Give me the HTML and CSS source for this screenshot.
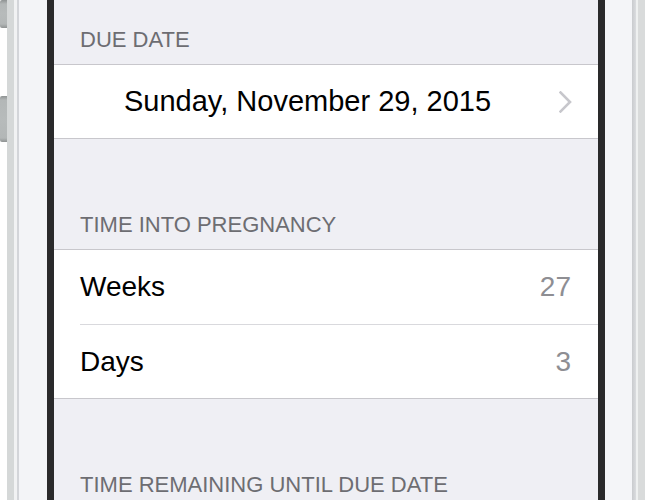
FILE: index.html
```html
<!DOCTYPE html>
<html lang="en">
<head>
<meta charset="utf-8">
<title>Due Date</title>
<link rel="stylesheet" href="styles.css">
</head>
<body>
<div class="device">
  <div class="side-buttons">
    <div class="hw-button hw-button-top"></div>
    <div class="hw-button hw-button-volume"></div>
  </div>
  <div class="frame frame-left"></div>
  <div class="bezel"></div>
  <main class="screen">
    <div class="section-header section-header-first">DUE DATE</div>
    <div class="group">
      <div class="cell cell-date">
        <span class="date-text">Sunday, November 29, 2015</span>
        <svg class="chevron" width="13" height="22" viewBox="0 0 13 22" aria-hidden="true">
          <polyline points="1.5,1.5 11,11 1.5,20.5" fill="none" stroke="#c7c7cc" stroke-width="2.6" stroke-linecap="square" stroke-linejoin="miter"/>
        </svg>
      </div>
    </div>

    <div class="section-header">TIME INTO PREGNANCY</div>
    <div class="group">
      <div class="cell cell-first">
        <span class="cell-label">Weeks</span>
        <span class="cell-value">27</span>
      </div>
      <div class="cell cell-separated">
        <span class="cell-label">Days</span>
        <span class="cell-value">3</span>
      </div>
    </div>

    <div class="section-header">TIME REMAINING UNTIL DUE DATE</div>
  </main>
  <div class="bezel"></div>
  <div class="frame frame-right"></div>
</div>
</body>
</html>
```

FILE: styles.css
```css
* {
  box-sizing: border-box;
}

html, body {
  margin: 0;
  padding: 0;
  height: 500px;
  overflow: hidden;
  background: #ffffff;
  font-family: "Liberation Sans", Arial, sans-serif;
}

.device {
  display: flex;
  height: 500px;
}

.side-buttons {
  width: 7px;
  display: flex;
  flex-direction: column;
}

.hw-button {
  width: 7px;
  border-radius: 2px 0 0 2px;
  background: linear-gradient(to bottom, #8f9393 0, #b3b7b7 4px, #b7bbbb 50%, #b3b7b7 calc(100% - 4px), #8f9393 100%);
}

.hw-button-top {
  height: 28px;
}

.hw-button-volume {
  height: 46px;
  margin-top: 68px;
}

.frame {
  width: 40px;
}

.frame-left {
  background: linear-gradient(to right,
    #d5d8d8 0, #d5d8d8 7px,
    #f1f2f3 7px, #f1f2f3 10px,
    #d3d5d9 10px, #d3d5d9 12px,
    #f3f4f7 12px, #f3f4f7 100%);
}

.frame-right {
  background: linear-gradient(to right,
    #f4f5f8 0, #f4f5f8 27px,
    #c9cbce 27px, #dadcdf 31px,
    #eef0f0 31px, #eef0f0 33px,
    #d9dbdb 33px, #d9dbdb 100%);
}

.bezel {
  width: 7px;
  background: #2a2a2b;
}

.screen {
  width: 544px;
  background: #efeff4;
  display: flex;
  flex-direction: column;
  flex-shrink: 0;
}

.section-header {
  height: 110px;
  flex-shrink: 0;
  display: flex;
  align-items: flex-end;
  padding: 0 26px 11px;
  font-size: 22px;
  line-height: 26px;
  color: #6d6d72;
}

.section-header-first {
  height: 64px;
}

.group {
  flex-shrink: 0;
  background: #ffffff;
  border-top: 1px solid #c8c7cc;
  border-bottom: 1px solid #c8c7cc;
}

.cell {
  height: 73px;
  display: flex;
  align-items: center;
  justify-content: space-between;
  padding: 0 27px 0 26px;
  font-size: 28px;
  color: #000000;
}

.cell-first {
  height: 74px;
}

.cell-separated {
  height: 74px;
  margin-left: 26px;
  padding-left: 0;
  border-top: 1px solid #d9d9dd;
}

.cell-value {
  color: #8e8e93;
}

.cell-date {
  padding-right: 26px;
}

.date-text {
  margin-left: 44px;
  font-size: 29px;
}

.chevron {
  display: block;
}
```
